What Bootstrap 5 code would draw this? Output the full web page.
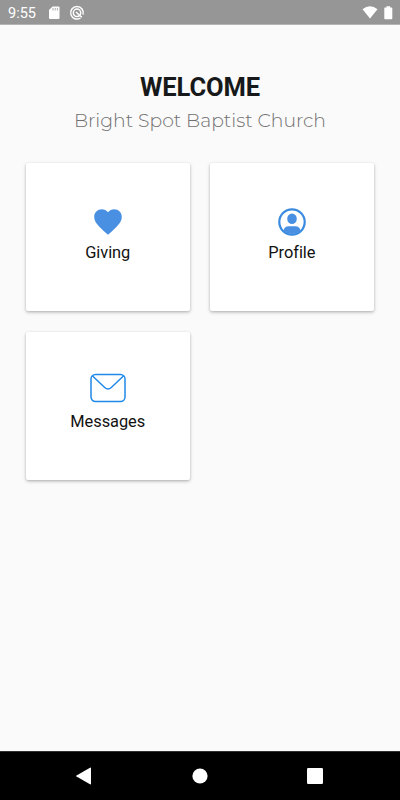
<!DOCTYPE html>
<html lang="en">
<head>
<meta charset="utf-8">
<meta name="viewport" content="width=device-width, initial-scale=1">
<title>Welcome</title>
<link href="https://cdn.jsdelivr.net/npm/bootstrap@5.3.0/dist/css/bootstrap.min.css" rel="stylesheet">
<style>
body{background:#fafafa;font-family:Roboto,"Liberation Sans",sans-serif;color:#111;height:800px;overflow:hidden}
svg{display:block;flex:none}
.status{height:24px;background:#969696;padding:1px 7px 0 8px;box-shadow:0 1px 0 #b4b4b4}
.clock{font-size:14.5px;line-height:23px;width:40px;padding-top:1px}
.title{font-size:25.5px;font-weight:700;line-height:30px;margin-top:48px;letter-spacing:-.1px;color:#171819}
.church{font-family:Montserrat,Inter,"Open Sans",sans-serif;font-weight:300;font-size:18.800px;line-height:24px;color:#707070;margin-top:7px;letter-spacing:0}
.tiles{padding:0 26.400px 0 26px;margin-top:30px}
.tiles .row{--bs-gutter-x:20.600px;row-gap:21px}
.tile{height:148px;border:0;border-radius:2px;background:#fff;box-shadow:0 1px 3px rgba(0,0,0,.26),0 2px 4px rgba(0,0,0,.08);padding-top:40px}
.glyph{height:38px}
.glyph-mail{margin-top:-3px;margin-bottom:3px}
.tile-label{font-size:16.4px;line-height:22px;letter-spacing:-.05px;padding-top:1px}
.softkeys{height:49px;background:#000;border-top:1px solid #303030;padding:0 77px 0 76px}
.home-key{margin-left:2px}
</style>
<script src="https://cdn.jsdelivr.net/npm/bootstrap@5.3.0/dist/js/bootstrap.bundle.min.js"></script>
</head>
<body class="d-flex flex-column m-0">
<header class="status d-flex align-items-center text-white">
  <span class="clock">9:55</span>
  <svg width="12" height="14" viewBox="0 0 12 14"><path fill="#fff" d="M4.600.5H10.500q1 0 1 1v10.500q0 1-1 1H2q-1 0-1-1V4.100z"/><path stroke="#969696" stroke-width=".8" d="M5 2v2.500M7.200 2v2.500M9.400 2v2.500"/></svg>
  <svg class="ms-2" width="18" height="16" viewBox="0 0 18 16"><g fill="none" stroke="#fff"><path stroke-width="1.500" d="M12.500 13A6.300 6.300 0 1 1 15 9.600"/><circle cx="9" cy="7.800" r="3.700" stroke-width="1.500"/><path stroke-width="1.500" d="M8 7l5.800 5.200"/></g></svg>
  <svg class="ms-auto" width="17" height="14" viewBox="0 0 17 14"><path fill="#fff" d="M.5 3.300Q8-2.700 15.500 3.300L8 12.600z"/></svg>
  <svg width="9" height="14" viewBox="0 0 9 14" style="margin-left:5px"><path fill="#fff" d="M2.500.2h3.600v1.200H7.700q.6 0 .6.700v10.400q0 .7-.7.700H1q-.7 0-.7-.7V2.100q0-.7.7-.7h1.500z"/></svg>
</header>
<main class="flex-grow-1 text-center">
  <h1 class="title mb-0">WELCOME</h1>
  <p class="church mb-0">Bright Spot Baptist Church</p>
  <div class="tiles"><div class="row">
    <div class="col-6"><div class="card tile align-items-center">
      <div class="glyph d-flex align-items-center"><svg width="28" height="26" viewBox="0 0 28 26"><path fill="#4a90e2" d="M14 25.700l-2-1.800C4.900 17.500.2 13.200.2 7.900.2 3.600 3.500.3 7.800.3c2.400 0 4.700 1.100 6.200 2.900C15.500 1.400 17.800.3 20.200.3c4.300 0 7.600 3.300 7.600 7.600 0 5.300-4.700 9.600-11.800 16z"/></svg></div>
      <div class="tile-label">Giving</div></div></div>
    <div class="col-6"><div class="card tile align-items-center">
      <div class="glyph d-flex align-items-center"><svg width="28" height="28" viewBox="0 0 28 28"><circle cx="14" cy="14" r="12.700" fill="none" stroke="#3a8be0" stroke-width="2.200"/><ellipse cx="14" cy="10.800" rx="4.800" ry="5.300" fill="#4a90e2"/><path fill="#4a90e2" d="M5.500 22.500c.5-2.700 2.500-4.200 5.300-4.200h6.400c2.800 0 4.800 1.500 5.300 4.200A12 12 0 0 1 5.500 22.500z"/></svg></div>
      <div class="tile-label">Profile</div></div></div>
    <div class="col-6"><div class="card tile align-items-center">
      <div class="glyph glyph-mail d-flex align-items-center"><svg width="36" height="30" viewBox="0 0 36 30"><g fill="none" stroke="#2089e8" stroke-width="1.500"><rect x="1" y="1.500" width="34" height="27" rx="4.500"/><path d="M2.300 2.800L14.700 14.500Q18 17.500 21.300 14.500L33.700 2.800"/></g></svg></div>
      <div class="tile-label">Messages</div></div></div>
  </div></div>
</main>
<footer class="softkeys d-flex align-items-center justify-content-between">
  <svg width="15" height="18" viewBox="0 0 15 18"><path fill="#fff" d="M14 .700q1-.5 1 .6v15.400q0 1.100-1 .6L.5 9.600Q-.1 9 .5 8.400z"/></svg>
  <svg class="home-key" width="16" height="16" viewBox="0 0 16 16"><circle cx="8" cy="8" r="7.600" fill="#fff"/></svg>
  <svg width="16" height="16" viewBox="0 0 16 16"><rect width="16" height="16" rx="1.300" fill="#fff"/></svg>
</footer>
</body>
</html>
